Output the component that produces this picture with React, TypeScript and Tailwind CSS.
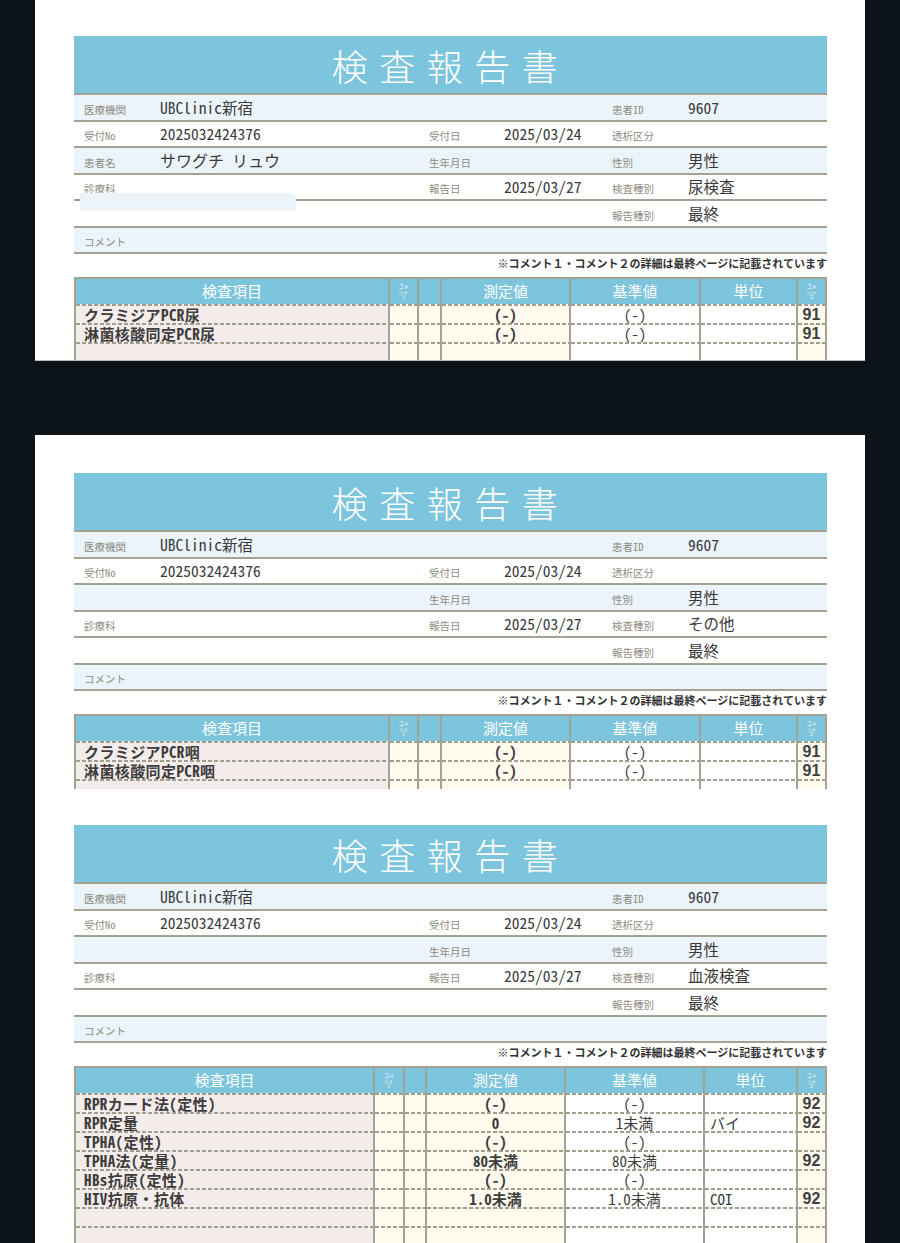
import React from "react";

const MONO = "font-['Noto_Sans_Mono_CJK_JP','Noto_Sans_CJK_JP','Noto_Sans',monospace]";
const SANS = "font-['Noto_Sans_CJK_JP','Noto_Sans',sans-serif]";
const DASH =
  "bg-[image:repeating-linear-gradient(90deg,#a09e90_0px,#a09e90_4px,transparent_4px,transparent_6px)] bg-[length:100%_2px] bg-no-repeat bg-top";

type Cell = { label?: string; value?: string; big?: boolean };
type Row = { blue: boolean; cells: Cell[]; redact?: boolean };

type TRow = { name?: string; val?: string; ref?: string; unit?: string; c2?: string };

function InfoRow({ row }: { row: Row }) {
  return (
    <div
      className={`relative grid h-[26.5px] grid-cols-[86px_269px_75px_108px_76px_1fr] border-t-2 border-[#a4a294] ${
        row.blue ? "bg-[#ebf4fa]" : "bg-white"
      }`}
    >
      {row.cells.map((c, i) => (
        <React.Fragment key={i}>
          <div className={`flex items-center ${i === 0 ? "pl-[10px]" : ""}`}>
            <span className={`${MONO} mt-[5px] text-[10.5px] leading-none text-[#8e8b7f]`}>{c.label ?? ""}</span>
          </div>
          <div className="flex items-center">
            <span className={`${MONO} leading-none text-[#3a3a3a] ${c.big ? "text-[16px]" : "text-[15.5px]"}`}>
              {c.value ?? ""}
            </span>
          </div>
        </React.Fragment>
      ))}
      {row.redact ? (
        <div className="absolute left-[6px] top-[18px] z-10 h-[18px] w-[216px] rounded-tr-[6px] bg-[#edf4f9]" />
      ) : null}
    </div>
  );
}

function Header({ cols }: { cols: string }) {
  const cell = "flex items-center justify-center border-r-2 border-[#a4a294] text-[15px] text-white";
  const tiny = (n: string) => (
    <div className={`flex flex-col items-center justify-center text-[5px] leading-[5.5px] text-white ${SANS}`}>
      <span>コメ</span>
      <span>ント</span>
      <span>{n}</span>
    </div>
  );
  return (
    <div className={`grid h-[25px] bg-[#7dc5dc] ${cols} ${SANS}`}>
      <div className={cell}>検査項目</div>
      <div className={`${cell}`}>{tiny("1")}</div>
      <div className={cell}></div>
      <div className={cell}>測定値</div>
      <div className={cell}>基準値</div>
      <div className={cell}>単位</div>
      <div className="flex items-center justify-center">{tiny("2")}</div>
    </div>
  );
}

function DataRow({ r, cols }: { r: TRow; cols: string }) {
  const base = `flex h-[19px] items-center pt-[2px] border-r-2 border-[#a4a294] ${DASH}`;
  return (
    <div className={`grid ${cols}`}>
      <div className={`${base} bg-[#f4ecea] pl-[8px]`}>
        <span className={`${MONO} text-[15px] tracking-[0.4px] font-bold leading-none text-[#3d3d3d]`}>{r.name ?? ""}</span>
      </div>
      <div className={`${base} bg-[#fffbee]`} />
      <div className={`${base} bg-[#fffbee]`} />
      <div className={`${base} justify-center bg-[#fffbee]`}>
        <span className={`${MONO} text-[15px] font-bold leading-none text-[#3d3d3d]`}>{r.val ?? ""}</span>
      </div>
      <div className={`${base} justify-center bg-white`}>
        <span className={`${MONO} text-[15px] leading-none text-[#3d3d3d]`}>{r.ref ?? ""}</span>
      </div>
      <div className={`${base} bg-white pl-[5px]`}>
        <span className={`${MONO} text-[15px] leading-none text-[#3d3d3d]`}>{r.unit ?? ""}</span>
      </div>
      <div className={`flex h-[19px] items-center justify-center pt-[2px] bg-[#fffbee] ${DASH}`}>
        <span className="font-['Liberation_Sans_Narrow','Liberation_Sans',sans-serif] text-[16px] font-bold leading-none text-[#404040]">
          {r.c2 ?? ""}
        </span>
      </div>
    </div>
  );
}

function Report({
  rows,
  tRows,
  cols,
  clip,
  pt,
}: {
  rows: Row[];
  tRows: TRow[];
  cols: string;
  clip?: string;
  pt: string;
}) {
  return (
    <div className={`pl-[39px] pr-[38px] ${pt}`}>
      <div
        className={`flex h-[57px] items-center justify-center bg-[#7dc5dc] text-[36px] font-light leading-none tracking-[11.5px] text-white ${SANS}`}
      >
        検査報告書
      </div>
      {rows.map((r, i) => (
        <InfoRow key={i} row={r} />
      ))}
      <div className="h-[2px] bg-[#a4a294]" />
      <div className="flex h-[23px] items-start justify-end pt-[1px]">
        <span className={`${SANS} text-[11px] font-bold leading-[17px] text-[#333]`}>
          ※コメント１・コメント２の詳細は最終ページに記載されています
        </span>
      </div>
      <div className={`overflow-hidden ${clip ?? ""}`}>
        <div className="border-2 border-[#a4a294]">
          <Header cols={cols} />
          {tRows.map((r, i) => (
            <DataRow key={i} r={r} cols={cols} />
          ))}
        </div>
      </div>
    </div>
  );
}

const COLS_A = "grid-cols-[314px_29px_23px_129px_130px_97px_27px]";
const COLS_B = "grid-cols-[299px_30px_22px_139px_139px_93px_27px]";

function infoRows(kind: string, name: boolean, redact: boolean): Row[] {
  return [
    {
      blue: true,
      cells: [{ label: "医療機関", value: "UBClinic新宿" }, {}, { label: "患者ID", value: "9607" }],
    },
    {
      blue: false,
      cells: [
        { label: "受付No", value: "2025032424376" },
        { label: "受付日", value: "2025/03/24" },
        { label: "透析区分" },
      ],
    },
    {
      blue: true,
      cells: [
        name ? { label: "患者名", value: "サワグチ リュウ", big: true } : {},
        { label: "生年月日" },
        { label: "性別", value: "男性" },
      ],
    },
    {
      blue: false,
      redact,
      cells: [{ label: "診療科" }, { label: "報告日", value: "2025/03/27" }, { label: "検査種別", value: kind }],
    },
    { blue: false, cells: [{}, {}, { label: "報告種別", value: "最終" }] },
    { blue: true, cells: [{ label: "コメント" }, {}, {}] },
  ];
}

export default function App() {
  const t1: TRow[] = [
    { name: "クラミジアPCR尿", val: "(-)", ref: "(-)", c2: "91" },
    { name: "淋菌核酸同定PCR尿", val: "(-)", ref: "(-)", c2: "91" },
    {},
  ];
  const t2: TRow[] = [
    { name: "クラミジアPCR咽", val: "(-)", ref: "(-)", c2: "91" },
    { name: "淋菌核酸同定PCR咽", val: "(-)", ref: "(-)", c2: "91" },
    {},
  ];
  const t3: TRow[] = [
    { name: "RPRカード法(定性)", val: "(-)", ref: "(-)", c2: "92" },
    { name: "RPR定量", val: "0", ref: "1未満", unit: "バイ", c2: "92" },
    { name: "TPHA(定性)", val: "(-)", ref: "(-)" },
    { name: "TPHA法(定量)", val: "80未満", ref: "80未満", c2: "92" },
    { name: "HBs抗原(定性)", val: "(-)", ref: "(-)" },
    { name: "HIV抗原・抗体", val: "1.0未満", ref: "1.0未満", unit: "COI", c2: "92" },
    {},
    {},
    {},
    {},
  ];
  return (
    <div className="h-[1243px] w-[900px] overflow-hidden bg-[#0c141a]">
      <div className="mx-[35px] h-[361px] overflow-hidden border-b border-[#bdbdbd] bg-white">
        <Report rows={infoRows("尿検査", true, true)} tRows={t1} cols={COLS_A} pt="pt-[36px]" />
      </div>
      <div className="mx-[35px] mt-[74px] h-[900px] bg-white">
        <Report rows={infoRows("その他", false, false)} tRows={t2} cols={COLS_A} clip="h-[75px]" pt="pt-[38px]" />
        <Report rows={infoRows("血液検査", false, false)} tRows={t3} cols={COLS_B} pt="pt-[36px]" />
      </div>
    </div>
  );
}
